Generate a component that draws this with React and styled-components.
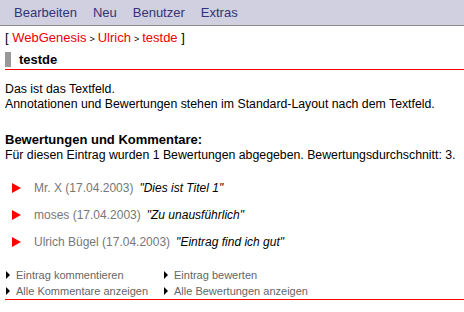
import styled, { createGlobalStyle } from "styled-components";

const GlobalStyle = createGlobalStyle`
	body {
		margin: 0;
		background: #ffffff;
		font-family: "Liberation Sans", Arial, sans-serif;
		color: #000000;
	}
`;

const Page = styled.div`
	width: 464px;
	height: 312px;
	overflow: hidden;
`;

const NavBar = styled.div`
	display: flex;
	gap: 16px;
	height: 25px;
	align-items: center;
	padding-left: 14px;
	background-color: #d0d0e0;
	border-bottom: 1px solid #8a8a8a;
	font-size: 13px;
	color: #333377;
`;

const NavItem = styled.span`
	cursor: pointer;
`;

const Content = styled.div`
	padding-left: 5px;
`;

const Crumbs = styled.div`
	margin-top: 4px;
	font-size: 13px;
	line-height: 15px;
	color: #000;
`;

const CrumbLink = styled.span`
	color: #ee0000;
`;

const CrumbSep = styled.span`
	font-size: 9px;
	margin: 0 3px;
`;

const TitleRow = styled.div`
	display: flex;
	align-items: stretch;
	margin-top: 5px;
	padding-bottom: 2px;
	border-bottom: 1px solid #ff0000;
`;

const TitleBar = styled.div`
	width: 6px;
	height: 15px;
	background-color: #999999;
	margin-right: 8px;
`;

const Title = styled.h1`
	margin: 0;
	font-size: 13px;
	font-weight: bold;
	line-height: 15px;
`;

const Text = styled.p`
	margin: ${(p) => p.mt || 0}px 0 0 0;
	font-size: 12.3px;
	line-height: 15px;
`;

const SubHeading = styled.h2`
	margin: 20px 0 0 0;
	font-size: 13px;
	line-height: 16px;
	font-weight: bold;
`;

const Ratings = styled.ul`
	list-style: none;
	margin: 11px 0 0 0;
	padding: 0;
`;

const Rating = styled.li`
	display: flex;
	align-items: center;
	height: 27px;
	font-size: 12px;
`;

const RedArrow = styled.span`
	width: 0;
	height: 0;
	margin-left: 7px;
	margin-right: 13px;
	border-top: 5px solid transparent;
	border-bottom: 5px solid transparent;
	border-left: 9px solid #ff0000;
`;

const Author = styled.span`
	color: #777777;
	margin-right: 6px;
`;

const Comment = styled.span`
	font-style: italic;
`;

const Actions = styled.div`
	display: grid;
	grid-template-columns: 158px auto;
	margin-top: 12px;
	border-bottom: 1px solid #ff0000;
	font-size: 11px;
	line-height: 17px;
	color: #666666;
`;

const Action = styled.div`
	display: flex;
	align-items: center;
	height: 16px;
	cursor: pointer;
`;

const SmallArrow = styled.span`
	width: 0;
	height: 0;
	margin-left: 1px;
	margin-right: 6px;
	border-top: 4px solid transparent;
	border-bottom: 4px solid transparent;
	border-left: 4px solid #000000;
`;

const ratings = [
	{ author: "Mr. X", date: "17.04.2003", text: "Dies ist Titel 1" },
	{ author: "moses", date: "17.04.2003", text: "Zu unausführlich" },
	{ author: "Ulrich Bügel", date: "17.04.2003", text: "Eintrag find ich gut" },
];

const actions = [
	"Eintrag kommentieren",
	"Eintrag bewerten",
	"Alle Kommentare anzeigen",
	"Alle Bewertungen anzeigen",
];

export default function App() {
	return (
		<Page>
			<GlobalStyle />
			<NavBar>
				<NavItem>Bearbeiten</NavItem>
				<NavItem>Neu</NavItem>
				<NavItem>Benutzer</NavItem>
				<NavItem>Extras</NavItem>
			</NavBar>
			<Content>
				<Crumbs>
					[ <CrumbLink>WebGenesis</CrumbLink>
					<CrumbSep>&gt;</CrumbSep>
					<CrumbLink>Ulrich</CrumbLink>
					<CrumbSep>&gt;</CrumbSep>
					<CrumbLink>testde</CrumbLink> ]
				</Crumbs>
				<TitleRow>
					<TitleBar />
					<Title>testde</Title>
				</TitleRow>
				<Text mt={12}>
					Das ist das Textfeld.
					<br />
					Annotationen und Bewertungen stehen im Standard-Layout nach dem
					Textfeld.
				</Text>
				<SubHeading>Bewertungen und Kommentare:</SubHeading>
				<Text>
					Für diesen Eintrag wurden 1 Bewertungen abgegeben.
					Bewertungsdurchschnitt: 3.
				</Text>
				<Ratings>
					{ratings.map((r) => (
						<Rating key={r.author}>
							<RedArrow />
							<Author>
								{r.author} ({r.date})
							</Author>
							<Comment>"{r.text}"</Comment>
						</Rating>
					))}
				</Ratings>
				<Actions>
					{actions.map((a) => (
						<Action key={a}>
							<SmallArrow />
							{a}
						</Action>
					))}
				</Actions>
			</Content>
		</Page>
	);
}
